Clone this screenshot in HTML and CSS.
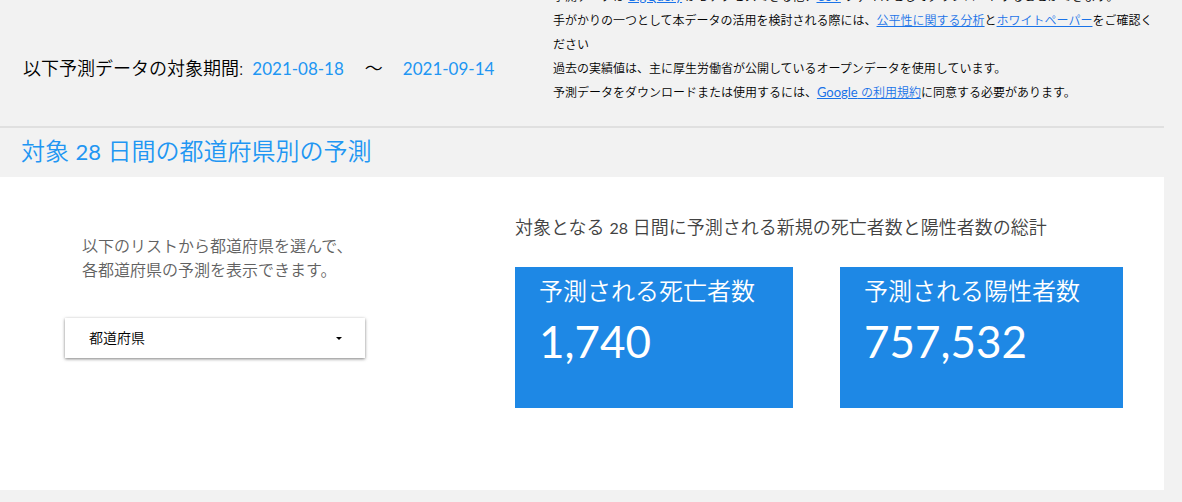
FILE: index.html
```
<!DOCTYPE html>
<html lang="ja">
<head>
  <meta charset="UTF-8">
  <meta name="viewport" content="width=device-width, initial-scale=1">
  <title>都道府県別の予測</title>
  <link rel="stylesheet" href="styles.css">
</head>
<body>
  <!-- 対象期間と注意事項 -->
  <header class="header-row">
    <div class="period">
      <span class="period-label">以下予測データの対象期間:</span>
      <span class="period-date">2021-08-18</span>
      <span class="period-sep">～</span>
      <span class="period-date">2021-09-14</span>
    </div>
    <div class="notes">
      <p>予測データは <a href="#"><span class="en">BigQuery</span></a> からアクセスできる他、<a href="#"><span class="en">CSV</span></a> ファイルとしてダウンロードすることができます。</p>
      <p>手がかりの一つとして本データの活用を検討される際には、<a href="#">公平性に関する分析</a>と<a href="#">ホワイトペーパー</a>をご確認ください</p>
      <p>過去の実績値は、主に厚生労働省が公開しているオープンデータを使用しています。</p>
      <p>予測データをダウンロードまたは使用するには、<a href="#"><span class="en">Google</span> の利用規約</a>に同意する必要があります。</p>
    </div>
  </header>

  <h1 class="section-title">対象 <span class="num">28</span> 日間の都道府県別の予測</h1>

  <!-- メインコンテンツ -->
  <main class="main-content">
    <div class="picker">
      <label class="picker-text" for="prefecture">以下のリストから都道府県を選んで、<br>各都道府県の予測を表示できます。</label>
      <div class="select-box">
        <select class="pref-select" id="prefecture">
          <option>都道府県</option>
          <option>北海道</option>
          <option>東京都</option>
          <option>大阪府</option>
          <option>福岡県</option>
        </select>
        <svg class="select-arrow" viewBox="0 0 6 3" aria-hidden="true"><path d="M0 0h6L3 3z"/></svg>
      </div>
    </div>
    <div class="summary">
      <h2 class="summary-title">対象となる <span class="num">28</span> 日間に予測される新規の死亡者数と陽性者数の総計</h2>
      <div class="cards">
        <div class="card">
          <div class="card-label">予測される死亡者数</div>
          <div class="card-value">1,740</div>
        </div>
        <div class="card">
          <div class="card-label">予測される陽性者数</div>
          <div class="card-value">757,532</div>
        </div>
      </div>
    </div>
  </main>
</body>
</html>
```

FILE: styles.css
```
* {
  box-sizing: border-box;
}
body {
  margin: 0;
  padding-right: 18px;
  background: #f2f2f2;
  color: #000;
  font-family: Lato, "Noto Sans CJK JP", sans-serif;
  font-weight: 350;
}
p, h1, h2 {
  margin: 0;
}
.num,
.en {
  font-weight: 400;
  line-height: 1;
}

/* ヘッダー */
.header-row {
  display: grid;
  grid-template-columns: 47.5% 1fr;
  border-bottom: 2px solid #e0e0e0;
}
.period {
  display: flex;
  align-items: baseline;
  padding: 56px 0 0 23px;
  font-size: 18px;
  line-height: 24px;
  white-space: nowrap;
}
.period-date {
  margin-left: 9px;
  color: #2196f3;
  font-size: 17px;
  font-weight: 400;
}
.period-sep {
  margin: 0 11px 0 21px;
}
.notes {
  /* 1行目は画面上端で切れる */
  margin-top: -15px;
  padding: 0 8px 21px 0;
  font-size: 12px;
  line-height: 24px;
}
.notes a {
  color: #1a73e8;
}
.notes .en {
  font-size: 13px;
}

.section-title {
  padding: 0 21px 3px;
  color: #2196f3;
  font-size: 24px;
  font-weight: 350;
  line-height: 46px;
}
.section-title .num {
  font-size: 22px;
}

/* メインコンテンツ */
.main-content {
  display: grid;
  grid-template-columns: 44.25% 1fr;
  min-height: 313px;
  background: #fff;
}
.picker {
  padding: 57px 0 0 65px;
}
.picker-text {
  display: block;
  padding-left: 17px;
  color: #616161;
  font-size: 16px;
  line-height: 24px;
}
.select-box {
  position: relative;
  width: 300px;
  margin-top: 36px;
}
.pref-select {
  display: block;
  width: 100%;
  height: 40px;
  padding: 0 24px 2px;
  border: none;
  background: #fff;
  box-shadow: 0 1px 3px rgba(0, 0, 0, 0.5);
  color: #000;
  font-family: inherit;
  font-size: 14px;
  font-weight: inherit;
  appearance: none;
  cursor: pointer;
}
.select-arrow {
  position: absolute;
  top: 19px;
  right: 23px;
  width: 6px;
  height: 3px;
  pointer-events: none;
}
.summary {
  padding: 38px 41px 0 0;
}
.summary-title {
  color: #424242;
  font-size: 18px;
  font-weight: 350;
  line-height: 24px;
}
.summary-title .num {
  font-size: 16px;
}
.cards {
  display: grid;
  grid-template-columns: 278fr 283fr;
  gap: 47px;
  margin-top: 28px;
}
.card {
  height: 141px;
  padding: 6px 24px;
  background: #1e88e5;
  color: #fff;
}
.card-label {
  font-size: 24px;
  line-height: 36px;
}
.card-value {
  font-size: 44px;
  font-weight: 400;
  line-height: 64px;
}
```
